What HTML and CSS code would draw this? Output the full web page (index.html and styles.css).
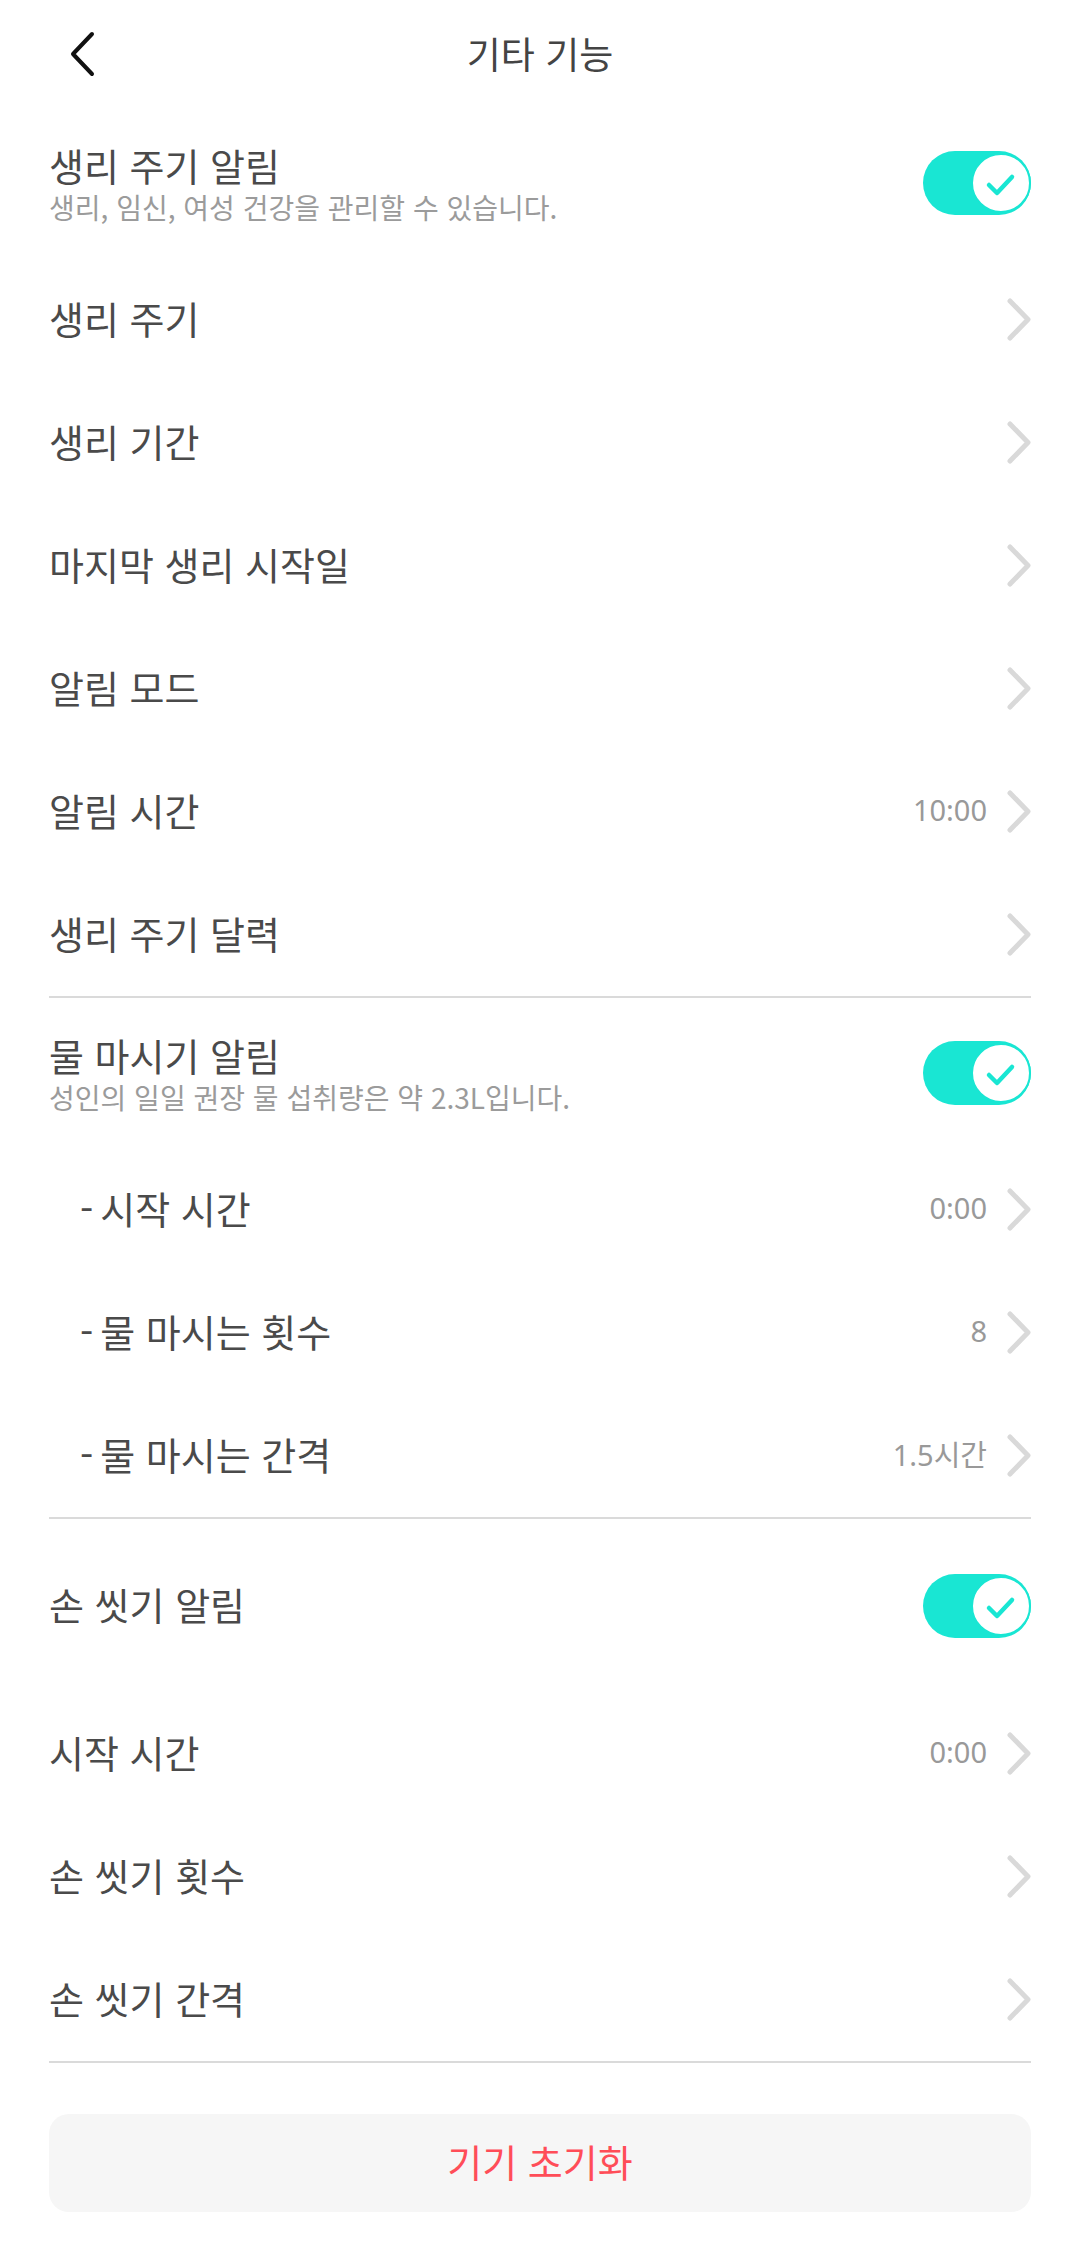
FILE: index.html
```html
<!DOCTYPE html>
<html lang="ko">
<head>
    <meta charset="UTF-8">
    <title>기타 기능</title>
    <link rel="stylesheet" href="styles.css">
</head>
<body>
    <div class="header">
        <div class="back">
            <svg width="30" height="46" viewBox="0 0 30 46"><path d="M24 3 L5 23 L24 43" fill="none" stroke="#111" stroke-width="4" stroke-linecap="round" stroke-linejoin="round"/></svg>
        </div>
        <div class="title">기타 기능</div>
        <div></div>
    </div>

    <div class="list">
        <!-- 생리 주기 -->
        <div class="switch-row">
            <div class="text">
                <div class="label">생리 주기 알림</div>
                <div class="desc">생리, 임신, 여성 건강을 관리할 수 있습니다.</div>
            </div>
            <div class="toggle"><div class="knob"><svg width="60" height="60" viewBox="0 0 60 60"><path d="M18 32 L26 40 L41 24" fill="none" stroke="#19e6d3" stroke-width="4.5" stroke-linecap="round" stroke-linejoin="round"/></svg></div></div>
        </div>
        <div class="row"><span class="label">생리 주기</span><svg class="arrow" width="24" height="43" viewBox="0 0 24 43"><path d="M3 3 L21 21.5 L3 40"/></svg></div>
        <div class="row"><span class="label">생리 기간</span><svg class="arrow" width="24" height="43" viewBox="0 0 24 43"><path d="M3 3 L21 21.5 L3 40"/></svg></div>
        <div class="row"><span class="label">마지막 생리 시작일</span><svg class="arrow" width="24" height="43" viewBox="0 0 24 43"><path d="M3 3 L21 21.5 L3 40"/></svg></div>
        <div class="row"><span class="label">알림 모드</span><svg class="arrow" width="24" height="43" viewBox="0 0 24 43"><path d="M3 3 L21 21.5 L3 40"/></svg></div>
        <div class="row"><span class="label">알림 시간</span><span class="value">10:00</span><svg class="arrow" width="24" height="43" viewBox="0 0 24 43"><path d="M3 3 L21 21.5 L3 40"/></svg></div>
        <div class="row"><span class="label">생리 주기 달력</span><svg class="arrow" width="24" height="43" viewBox="0 0 24 43"><path d="M3 3 L21 21.5 L3 40"/></svg></div>
        <div class="line"></div>

        <!-- 물 마시기 -->
        <div class="switch-row">
            <div class="text">
                <div class="label">물 마시기 알림</div>
                <div class="desc">성인의 일일 권장 물 섭취량은 약 2.3L입니다.</div>
            </div>
            <div class="toggle"><div class="knob"><svg width="60" height="60" viewBox="0 0 60 60"><path d="M18 32 L26 40 L41 24" fill="none" stroke="#19e6d3" stroke-width="4.5" stroke-linecap="round" stroke-linejoin="round"/></svg></div></div>
        </div>
        <div class="row sub"><span class="label"><i>-</i>시작 시간</span><span class="value">0:00</span><svg class="arrow" width="24" height="43" viewBox="0 0 24 43"><path d="M3 3 L21 21.5 L3 40"/></svg></div>
        <div class="row sub"><span class="label"><i>-</i>물 마시는 횟수</span><span class="value">8</span><svg class="arrow" width="24" height="43" viewBox="0 0 24 43"><path d="M3 3 L21 21.5 L3 40"/></svg></div>
        <div class="row sub"><span class="label"><i>-</i>물 마시는 간격</span><span class="value">1.5시간</span><svg class="arrow" width="24" height="43" viewBox="0 0 24 43"><path d="M3 3 L21 21.5 L3 40"/></svg></div>
        <div class="line"></div>

        <!-- 손 씻기 -->
        <div class="switch-row tall">
            <div class="text">
                <div class="label">손 씻기 알림</div>
            </div>
            <div class="toggle"><div class="knob"><svg width="60" height="60" viewBox="0 0 60 60"><path d="M18 32 L26 40 L41 24" fill="none" stroke="#19e6d3" stroke-width="4.5" stroke-linecap="round" stroke-linejoin="round"/></svg></div></div>
        </div>
        <div class="row"><span class="label">시작 시간</span><span class="value">0:00</span><svg class="arrow" width="24" height="43" viewBox="0 0 24 43"><path d="M3 3 L21 21.5 L3 40"/></svg></div>
        <div class="row"><span class="label">손 씻기 횟수</span><svg class="arrow" width="24" height="43" viewBox="0 0 24 43"><path d="M3 3 L21 21.5 L3 40"/></svg></div>
        <div class="row"><span class="label">손 씻기 간격</span><svg class="arrow" width="24" height="43" viewBox="0 0 24 43"><path d="M3 3 L21 21.5 L3 40"/></svg></div>
        <div class="line"></div>

        <div class="reset">기기 초기화</div>
    </div>
</body>
</html>
```

FILE: styles.css
```css
*{
    margin: 0;
    padding: 0;
    box-sizing: border-box;
}
body{
    background: #fff;
    font-family: "Noto Sans CJK KR", "Noto Sans", sans-serif;
    color: #4a4a4a;
}
.header{
    height: 108px;
    display: grid;
    grid-template-columns: 1fr auto 1fr;
    align-items: center;
}
.header .back{
    padding-left: 68px;
    display: flex;
    align-items: center;
}
.header .title{
    font-size: 37px;
    color: #444;
    padding-bottom: 3px;
}
.list{
    padding: 0 49px;
}
.switch-row{
    height: 150px;
    display: flex;
    align-items: center;
    justify-content: space-between;
}
.switch-row.tall{
    height: 173px;
}
.switch-row .text{
    padding-top: 5px;
}
.switch-row .label{
    font-size: 38px;
    line-height: 46px;
}
.switch-row .desc{
    font-size: 28px;
    line-height: 44px;
    margin-top: -3px;
    color: #9b9b9b;
}
.switch-row.tall .text{
    padding-top: 0;
    padding-bottom: 4px;
}
.toggle{
    width: 108px;
    height: 64px;
    border-radius: 32px;
    background: #19e6d3;
    padding: 2px;
    display: flex;
    justify-content: flex-end;
}
.toggle .knob{
    width: 60px;
    height: 60px;
    border-radius: 50%;
    background: #fff;
    margin-right: -2px;
    border: 2px solid #19e6d3;
    display: flex;
    align-items: center;
    justify-content: center;
}
.toggle .knob svg{
    flex: none;
}
.row{
    height: 123px;
    display: flex;
    align-items: center;
}
.row .label{
    font-size: 38px;
    flex: 1;
    padding-bottom: 5px;
}
.row.sub .label{
    padding-left: 31px;
}
.row.sub .label i{
    font-style: normal;
    margin-right: 7px;
}
.row .value{
    font-family: "Noto Sans", "Noto Sans CJK KR", sans-serif;
    font-size: 29px;
    color: #999;
    margin-right: 20px;
    padding-bottom: 5px;
}
.arrow{
    flex: none;
}
.arrow path{
    fill: none;
    stroke: #d9d9d9;
    stroke-width: 5;
    stroke-linecap: round;
    stroke-linejoin: round;
}
.line{
    height: 2px;
    background: #dadada;
}
.reset{
    margin-top: 51px;
    height: 98px;
    border-radius: 20px;
    background: #f6f6f6;
    color: #ff4d58;
    font-size: 38px;
    padding-bottom: 6px;
    display: flex;
    align-items: center;
    justify-content: center;
}
```
